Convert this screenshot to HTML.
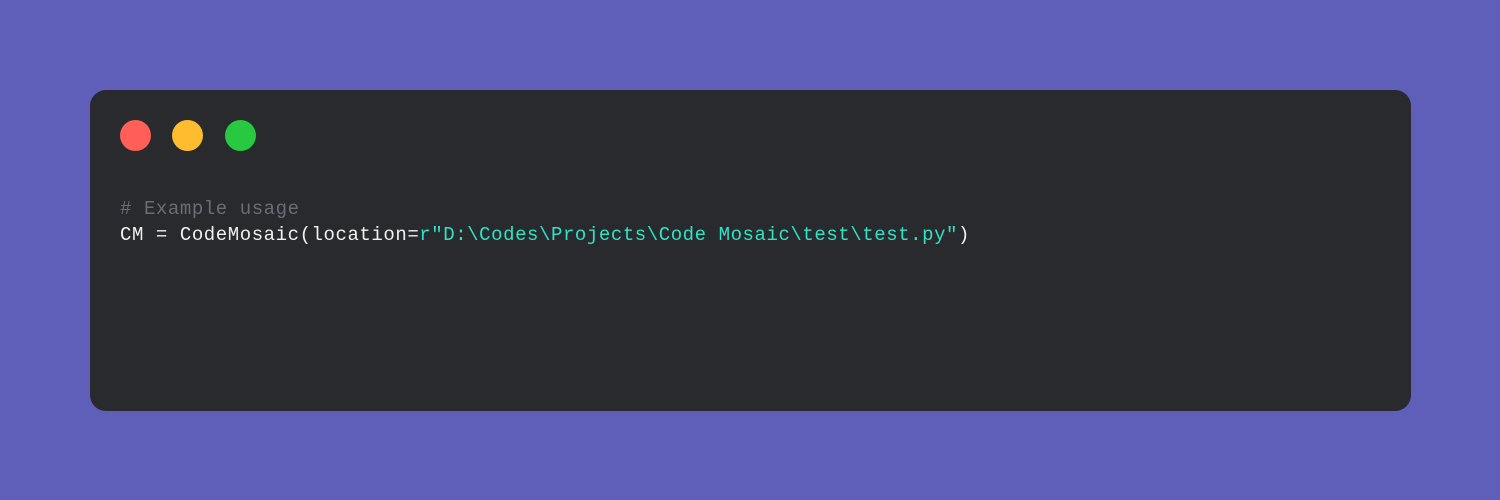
<!DOCTYPE html>
<html><head><style>
html,body{margin:0;padding:0;}
body{width:1500px;height:500px;background:#5f5eb8;position:relative;overflow:hidden;}
.card{position:absolute;left:90px;top:90px;width:1321px;height:321px;background:#292a2d;border-radius:16px;}
.dot{position:absolute;top:30px;width:31px;height:31px;border-radius:50%;}
pre{position:absolute;left:30px;top:106px;margin:0;font-family:"Liberation Mono",monospace;font-size:19px;letter-spacing:0.57px;line-height:26px;color:#f0f0f0;}
.c{color:#6b6c78}.s{color:#2ee3c6}
</style></head><body>
<div class="card">
<div class="dot" style="left:30px;background:#ff5f57"></div>
<div class="dot" style="left:82px;background:#febc2e"></div>
<div class="dot" style="left:135px;background:#28c840"></div>
<pre><span class="c"># Example usage</span>
CM = CodeMosaic(location=<span class="s">r"D:\Codes\Projects\Code Mosaic\test\test.py"</span>)</pre>
</div>
</body></html>
